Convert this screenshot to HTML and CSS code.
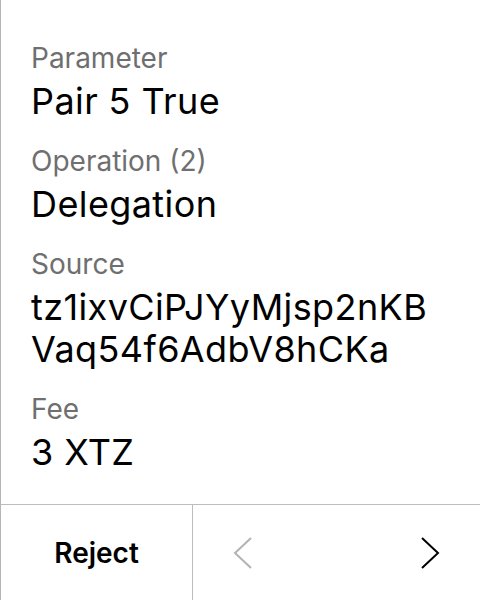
FILE: index.html
```html
<!DOCTYPE html>
<html lang="en">
<head>
<meta charset="utf-8">
<title>Review</title>
<link rel="stylesheet" href="styles.css">
</head>
<body>
<div class="screen">
  <div class="content">
    <div class="field">
      <div class="label">Parameter</div>
      <div class="value">Pair 5 True</div>
    </div>
    <div class="field">
      <div class="label">Operation (2)</div>
      <div class="value">Delegation</div>
    </div>
    <div class="field">
      <div class="label">Source</div>
      <div class="value">tz1ixvCiPJYyMjsp2nKB<br>Vaq54f6AdbV8hCKa</div>
    </div>
    <div class="field">
      <div class="label">Fee</div>
      <div class="value">3 XTZ</div>
    </div>
  </div>
  <div class="nav">
    <div class="reject">Reject</div>
    <div class="pager">
      <div class="arrow arrow-prev">
        <svg width="20" height="32" viewBox="0 0 20 32"><polyline points="18,1 2,16 18,31" fill="none" stroke="#b3b3b3" stroke-width="2"/></svg>
      </div>
      <div class="arrow arrow-next">
        <svg width="20" height="32" viewBox="0 0 20 32"><polyline points="2,1 18,16 2,31" fill="none" stroke="#000" stroke-width="2"/></svg>
      </div>
    </div>
  </div>
</div>
</body>
</html>
```
FILE: styles.css
```css
* { box-sizing: border-box; }
html, body {
  margin: 0;
  padding: 0;
  background: #fff;
}
body {
  font-family: Inter, "Noto Sans", sans-serif;
  color: #000;
}
.screen {
  width: 480px;
  height: 600px;
  border-left: 1px solid #b5b5b5;
  display: flex;
  flex-direction: column;
}
.content {
  flex: 1;
  padding: 42px 16px 0 30px;
  display: flex;
  flex-direction: column;
  gap: 23px;
}
.field {
  display: flex;
  flex-direction: column;
  gap: 6px;
}
.label {
  font-size: 28px;
  line-height: 32px;
  color: #6f6f6f;
}
.value {
  font-size: 36px;
  line-height: 42px;
  letter-spacing: 0.4px;
  color: #000;
}
.nav {
  height: 96px;
  border-top: 1px solid #bdbdbd;
  display: flex;
}
.reject {
  width: 192px;
  border-right: 1px solid #bdbdbd;
  display: flex;
  align-items: center;
  justify-content: center;
  font-size: 28px;
  font-weight: 600;
}
.pager {
  flex: 1;
  display: flex;
  justify-content: space-between;
}
.arrow {
  width: 100px;
  display: flex;
  align-items: center;
  justify-content: center;
}
```
